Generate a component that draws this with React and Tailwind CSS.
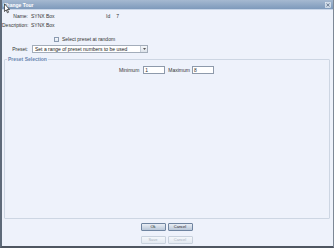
import React from 'react';

const font = { fontFamily: '"Liberation Sans", Arial, sans-serif' };

function Btn({ children, disabled }) {
    return (
        <button
            className={
                disabled
                    ? 'w-[25px] h-[8px] rounded-[1px] border border-[#c9d2de] bg-gradient-to-b from-[#f4f7fb] to-[#e3e9f1] text-[4px] leading-[6px] text-[#a9b3c0]'
                    : 'w-[25px] h-[8px] rounded-[1px] border border-[#6f84a0] bg-gradient-to-b from-[#e9eef5] to-[#b9c7d8] text-[4px] leading-[6px] text-[#222]'
            }
        >
            {children}
        </button>
    );
}

export default function App() {
    return (
        <div style={font} className="relative w-[334px] h-[248px] overflow-hidden bg-[#eef2fb] border-l-2 border-r border-b-2 border-l-[#5e6a79] border-r-[#7d8896] border-b-[#4f5661] text-[5px] leading-[6px] text-[#333]">
            {/* title bar */}
            <div className="flex items-center justify-between h-[10px] pl-[1px] pr-[2px] bg-gradient-to-b from-[#a6b9d1] to-[#7e9abb] border-b border-[#c9d6e8]">
                <span className="font-bold text-white text-[5px]">Change Tour</span>
                <svg width="6" height="6" viewBox="0 0 6 6">
                    <rect x="0.5" y="0.5" width="5" height="5" fill="#c7d3e2" stroke="#e8eef6" strokeWidth="0.6" />
                    <path d="M1.5 1.5 L4.5 4.5 M4.5 1.5 L1.5 4.5" stroke="#6e7f96" strokeWidth="0.9" />
                </svg>
            </div>

            {/* cursor */}
            <svg className="absolute left-[2px] top-[3px]" width="6" height="11" viewBox="0 0 7 12">
                <path d="M0.5 0.5 L0.5 9.5 L2.6 7.6 L4 11 L5.3 10.4 L3.9 7.1 L6.5 7.1 Z" fill="#fff" stroke="#111" strokeWidth="0.8" />
            </svg>

            <div className="pt-[3px]">
                <div className="flex items-center h-[6px]">
                    <span className="w-[26px] text-right">Name:</span>
                    <span className="ml-[3px] w-[75px]">SYNX Box</span>
                    <span>Id</span>
                    <span className="ml-[6px]">7</span>
                </div>
                <div className="flex items-center h-[6px] mt-[3px]">
                    <span className="w-[26px] text-right">Description:</span>
                    <span className="ml-[3px]">SYNX Box</span>
                </div>
                <div className="flex items-center h-[6px] mt-[8px] pl-[52px]">
                    <span className="w-[5px] h-[5px] border border-[#8b9bb1] bg-gradient-to-b from-[#f7f9fc] to-[#dfe6ef]" />
                    <span className="ml-[3px]">Select preset at random</span>
                </div>
                <div className="flex items-center h-[8px] mt-[3px]">
                    <span className="w-[26px] text-right">Preset:</span>
                    <div className="ml-[4px] flex items-center w-[116px] h-[8px] bg-white border border-[#a3adba]">
                        <span className="flex-1 pl-[2px] text-[#222]">Set a range of preset numbers to be used</span>
                        <span className="flex items-center justify-center w-[7px] h-full border-l border-[#c3cbd6] bg-gradient-to-b from-[#f5f7fa] to-[#dde3ea]">
                            <svg width="3" height="2" viewBox="0 0 3 2"><path d="M0 0 L3 0 L1.5 2 Z" fill="#555" /></svg>
                        </span>
                    </div>
                </div>

                <fieldset className="mt-[4px] ml-[2px] mr-[3px] h-[162px] border border-[#cdd6e3] rounded-[1px] px-[2px]">
                    <legend className="px-[1px] font-bold text-[#6a86b0] leading-[5px]">Preset Selection</legend>
                    <div className="flex items-center justify-center mt-[4px] pl-[3px] pr-[4px]">
                        <span>Minimum</span>
                        <span className="ml-[4px] w-[22px] h-[8px] bg-white border border-[#8e9aab] pl-[1px] leading-[6px]">1</span>
                        <span className="ml-[3px]">Maximum</span>
                        <span className="ml-[2px] w-[22px] h-[8px] bg-white border border-[#8e9aab] pl-[1px] leading-[6px]">8</span>
                    </div>
                </fieldset>

                <div className="flex justify-center gap-[2px] mt-[4px] pr-[2px]">
                    <Btn>Ok</Btn>
                    <Btn>Cancel</Btn>
                </div>
                <div className="flex justify-center gap-[2px] mt-[5px] pr-[2px]">
                    <Btn disabled>Save</Btn>
                    <Btn disabled>Cancel</Btn>
                </div>
            </div>
        </div>
    );
}
